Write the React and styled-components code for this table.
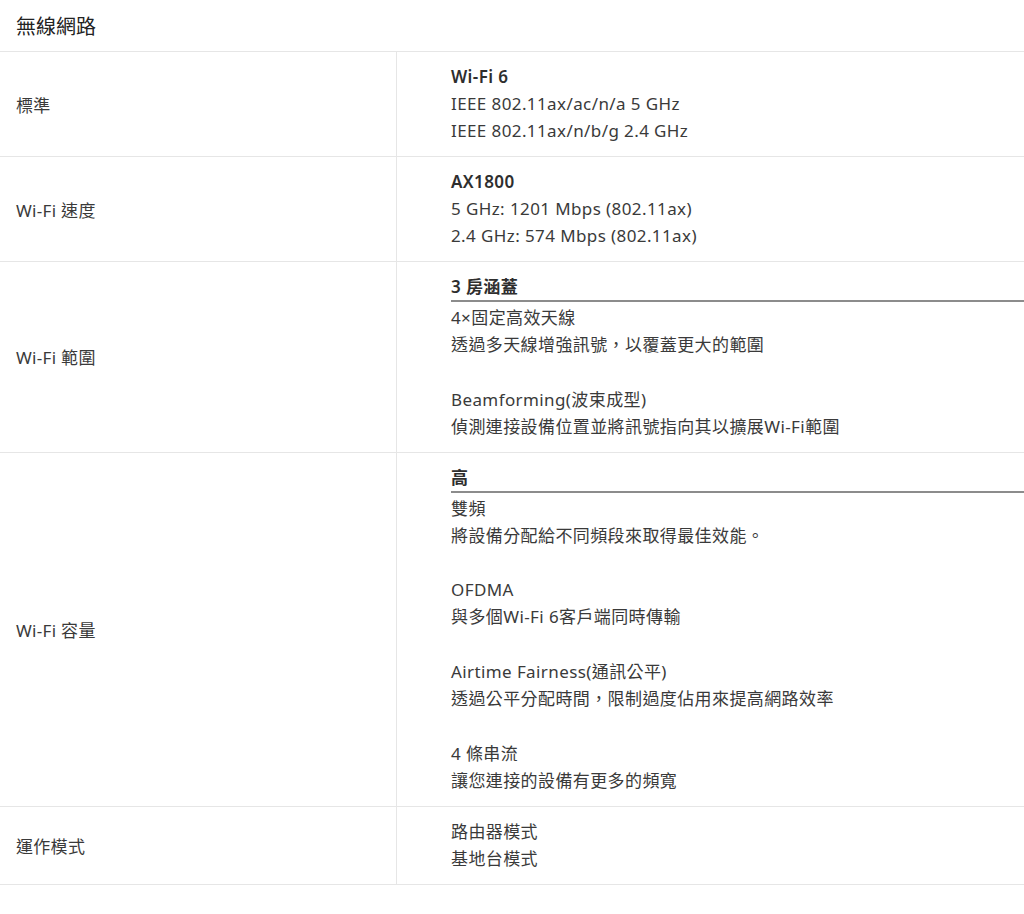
import React from "react";
import styled, { createGlobalStyle } from "styled-components";

const Global = createGlobalStyle`
  html, body { margin: 0; padding: 0; background: #fff; }
  body {
    font-family: "Noto Sans", "Noto Sans CJK TC", sans-serif;
    color: #3a3a3a;
    -webkit-font-smoothing: antialiased;
  }
`;

const Page = styled.div`
  width: 1024px;
`;

const Title = styled.h2`
  margin: 0;
  padding: 0 16px;
  height: 51px;
  display: flex;
  align-items: center;
  font-size: 20px;
  font-weight: 400;
  color: #222;
  border-bottom: 1px solid #e6e6e6;
`;

const Table = styled.div`
  display: grid;
  grid-template-columns: 397px 1fr;
`;

const Label = styled.div`
  display: flex;
  align-items: center;
  padding: 0 16px;
  font-size: 17px;
  letter-spacing: 0.3px;
  color: #3a3a3a;
  border-right: 1px solid #e6e6e6;
  border-bottom: 1px solid #e6e6e6;
`;

const Value = styled.div`
  padding: 11px 0 12px 54px;
  font-size: 17px;
  letter-spacing: 0.4px;
  color: #3a3a3a;
  border-bottom: 1px solid #e6e6e6;
`;

const Line = styled.div`
  height: ${(p) => (p.$blank ? "27.7px" : "27px")};
  line-height: 27px;
  white-space: nowrap;
  font-weight: ${(p) => (p.$bold ? 600 : 400)};
  color: ${(p) => (p.$bold ? "#2e2e2e" : "#3a3a3a")};
`;

const Rule = styled.hr`
  margin: 0 0 2px;
  border: 0;
  border-top: 2px solid #8c8c8c;
  height: 0;
`;

const rows = [
  {
    label: "標準",
    head: "Wi-Fi 6",
    lines: ["IEEE 802.11ax/ac/n/a 5 GHz", "IEEE 802.11ax/n/b/g 2.4 GHz"],
  },
  {
    label: "Wi-Fi 速度",
    head: "AX1800",
    lines: ["5 GHz: 1201 Mbps (802.11ax)", "2.4 GHz: 574 Mbps (802.11ax)"],
  },
  {
    label: "Wi-Fi 範圍",
    head: "3 房涵蓋",
    rule: true,
    lines: [
      "4×固定高效天線",
      "透過多天線增強訊號，以覆蓋更大的範圍",
      "",
      "Beamforming(波束成型)",
      "偵測連接設備位置並將訊號指向其以擴展Wi-Fi範圍",
    ],
  },
  {
    label: "Wi-Fi 容量",
    head: "高",
    rule: true,
    lines: [
      "雙頻",
      "將設備分配給不同頻段來取得最佳效能。",
      "",
      "OFDMA",
      "與多個Wi-Fi 6客戶端同時傳輸",
      "",
      "Airtime Fairness(通訊公平)",
      "透過公平分配時間，限制過度佔用來提高網路效率",
      "",
      "4 條串流",
      "讓您連接的設備有更多的頻寬",
    ],
  },
  {
    label: "運作模式",
    lines: ["路由器模式", "基地台模式"],
  },
];

export default function App() {
  return (
    <Page>
      <Global />
      <Title>無線網路</Title>
      <Table>
        {rows.map((r) => (
          <React.Fragment key={r.label}>
            <Label>{r.label}</Label>
            <Value>
              {r.head && <Line $bold>{r.head}</Line>}
              {r.rule && <Rule />}
              {r.lines.map((l, i) => (
                <Line key={i} $blank={l === ""}>
                  {l}
                </Line>
              ))}
            </Value>
          </React.Fragment>
        ))}
      </Table>
    </Page>
  );
}
